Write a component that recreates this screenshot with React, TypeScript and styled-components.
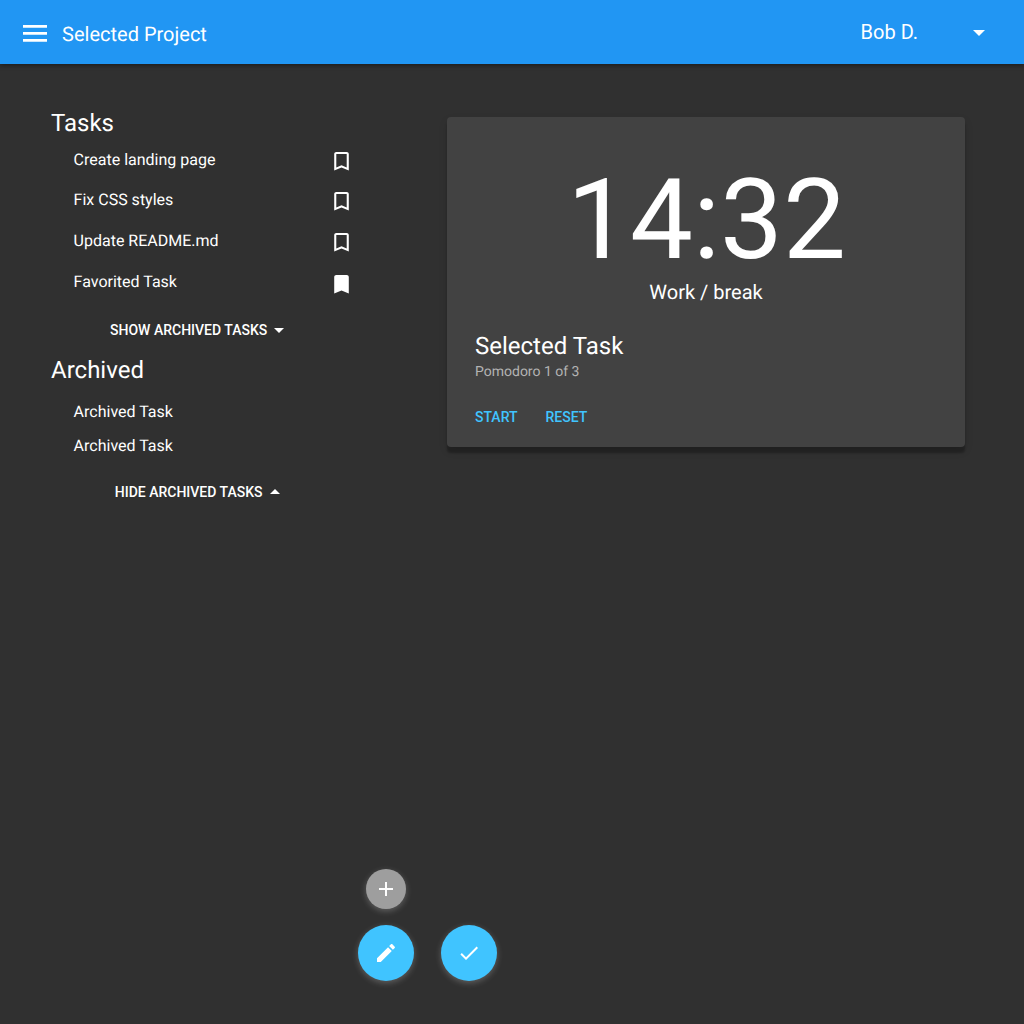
import React from "react";
import styled, { createGlobalStyle } from "styled-components";

const GlobalStyle = createGlobalStyle`
  *, *::before, *::after { box-sizing: border-box; }
  body { margin: 0; background: #303030; }
  button { font: inherit; color: inherit; background: none; border: 0; padding: 0; margin: 0; cursor: pointer; }
  h1, h2, p, ul { margin: 0; padding: 0; font-weight: 400; }
  svg { display: block; flex: none; }
`;

const Page = styled.div`
  display: flex;
  flex-direction: column;
  width: 1024px;
  height: 1024px;
  overflow: hidden;
  background: #303030;
  color: #fff;
  font-family: Roboto, "Liberation Sans", sans-serif;
  font-size: 16px;
  text-rendering: geometricPrecision;
`;

const AppBar = styled.header`
  display: flex;
  align-items: flex-start;
  flex: none;
  height: 64px;
  padding: 20px 39px 0 23px;
  background: #2196f3;
  box-shadow: 0 2px 4px rgba(0, 0, 0, 0.36);
  font-size: 20px;
  line-height: 24px;
`;

const MenuButton = styled.button`
  margin-top: 5px;
`;

const ProjectTitle = styled.h1`
  margin: 2px auto 0 15.1px;
  font-size: 20px;
`;

const UserMenu = styled.button`
  display: flex;
  align-items: flex-start;
  justify-content: space-between;
  width: 124.4px;

  svg { margin-top: 9.5px; }
`;

const Content = styled.main`
  display: flex;
  align-items: flex-start;
  flex: 1;
`;

const Sidebar = styled.section`
  display: flex;
  flex-direction: column;
  width: 447px;
  padding: 45px 93px 0 51px;
`;

const Heading = styled.h2`
  font-size: 24px;
  line-height: 28px;
`;

const List = styled.ul<{ $top: number }>`
  display: flex;
  flex-direction: column;
  list-style: none;
  padding: ${(p) => p.$top}px 0 0 22.6px;
`;

const Item = styled.li<{ $height: number }>`
  display: flex;
  justify-content: space-between;
  height: ${(p) => p.$height}px;
  line-height: 24px;
`;

const Toggle = styled.button<{ $top: number; $bottom: number; $lift?: number }>`
  display: flex;
  align-items: center;
  align-self: center;
  gap: 7px;
  margin: ${(p) => p.$top}px 10.7px ${(p) => p.$bottom}px 0;
  font-size: 14px;
  font-weight: 500;
  line-height: 20px;

  svg { margin-bottom: ${(p) => p.$lift ?? 0}px; }
`;

const TimerCard = styled.section`
  display: flex;
  flex-direction: column;
  width: 518px;
  height: 330px;
  margin-top: 53px;
  padding: 44px 28px 0;
  border-radius: 4px;
  background: #424242;
  box-shadow: 0 6px 2px rgba(0, 0, 0, 0.25), 0 4px 8px rgba(0, 0, 0, 0.12);
`;

const Clock = styled.div`
  padding-left: 1px;
  font-size: 112px;
  line-height: 120px;
  text-align: center;
`;

const Phase = styled.p`
  margin-top: -1px;
  font-size: 20px;
  line-height: 24px;
  text-align: center;
`;

const TaskName = styled.h2`
  margin-top: 28px;
  font-size: 24px;
  line-height: 28px;
`;

const Progress = styled.p`
  margin-top: 2px;
  color: #b3b3b3;
  font-size: 14px;
  line-height: 20px;
`;

const Actions = styled.div`
  display: flex;
  gap: 28px;
  margin-top: 24.5px;
`;

const TextButton = styled.button`
  color: #40c4ff;
  font-size: 14px;
  font-weight: 500;
  line-height: 20px;
`;

const FabBar = styled.footer`
  display: flex;
  align-items: flex-end;
  gap: 26.5px;
  padding: 0 0 43px 358.2px;
`;

const FabStack = styled.div`
  display: flex;
  flex-direction: column;
  align-items: center;
  gap: 16px;
`;

const Fab = styled.button<{ $mini?: boolean }>`
  display: flex;
  align-items: center;
  justify-content: center;
  width: ${(p) => (p.$mini ? 40 : 56)}px;
  height: ${(p) => (p.$mini ? 40 : 56)}px;
  border-radius: 50%;
  background: ${(p) => (p.$mini ? "#9e9e9e" : "#40c4ff")};
  box-shadow: 0 2px 6px rgba(255, 255, 255, 0.24);
`;

const MenuIcon = () => (
  <svg width="24" height="17" viewBox="0 0 24 17" fill="#fff">
    <path d="M0 0h24v2.8H0zM0 7h24v2.8H0zM0 14h24v2.8H0z" />
  </svg>
);

const Caret = ({ width = 10, height = 5, up = false }: { width?: number; height?: number; up?: boolean }) => (
  <svg width={width} height={height} viewBox="0 0 10 5" preserveAspectRatio="none" fill="#fff">
    <path d={up ? "M0 5l5-5 5 5z" : "M0 0l5 5 5-5z"} />
  </svg>
);

const Bookmark = styled.svg<{ $top: number }>`
  margin-top: ${(p) => p.$top}px;
  fill: #fff;
`;

const BookmarkIcon = ({ filled }: { filled: boolean }) => (
  <Bookmark $top={filled ? 2 : 1} width="25" height="24.5" viewBox="0 0 24 24" preserveAspectRatio="none">
    <path
      d={
        filled
          ? "M17 3H7c-1.1 0-2 .9-2 2v16l7-3 7 3V5c0-1.1-.9-2-2-2z"
          : "M17 3H7c-1.1 0-2 .9-2 2v16l7-3 7 3V5c0-1.1-.9-2-2-2zm0 15l-5-2.18L7 18V5h10v13z"
      }
    />
  </Bookmark>
);

const FabIcon = ({ d }: { d: string }) => (
  <svg width="24" height="24" viewBox="0 0 24 24" fill="#fff">
    <path d={d} />
  </svg>
);

const ADD = "M19 13h-6v6h-2v-6H5v-2h6V5h2v6h6v2z";
const EDIT =
  "M3 17.25V21h3.75L17.81 9.94l-3.75-3.75L3 17.25zM20.71 7.04c.39-.39.39-1.02 0-1.41l-2.34-2.34c-.39-.39-1.02-.39-1.41 0l-1.83 1.83 3.75 3.75 1.83-1.83z";
const CHECK = "M9 16.17L4.83 12l-1.42 1.41L9 19 21 7l-1.41-1.41z";

const tasks = [
  { name: "Create landing page", favorite: false, height: 40 },
  { name: "Fix CSS styles", favorite: false, height: 41 },
  { name: "Update README.md", favorite: false, height: 41 },
  { name: "Favorited Task", favorite: true, height: 24 },
];

const archived = ["Archived Task", "Archived Task"];

export default function App() {
  return (
    <Page>
      <GlobalStyle />
      <AppBar>
        <MenuButton aria-label="Menu">
          <MenuIcon />
        </MenuButton>
        <ProjectTitle>Selected Project</ProjectTitle>
        <UserMenu>
          Bob D.
          <Caret width={12} height={6} />
        </UserMenu>
      </AppBar>
      <Content>
        <Sidebar>
          <Heading>Tasks</Heading>
          <List $top={11}>
            {tasks.map((task) => (
              <Item key={task.name} $height={task.height}>
                {task.name}
                <BookmarkIcon filled={task.favorite} />
              </Item>
            ))}
          </List>
          <Toggle $top={26} $bottom={16}>
            SHOW ARCHIVED TASKS
            <Caret />
          </Toggle>
          <Heading>Archived</Heading>
          <List $top={16}>
            {archived.map((name, i) => (
              <Item key={i} $height={34}>
                {name}
              </Item>
            ))}
          </List>
          <Toggle $top={14} $bottom={0} $lift={2}>
            HIDE ARCHIVED TASKS
            <Caret up />
          </Toggle>
        </Sidebar>
        <TimerCard>
          <Clock>14:32</Clock>
          <Phase>Work / break</Phase>
          <TaskName>Selected Task</TaskName>
          <Progress>Pomodoro 1 of 3</Progress>
          <Actions>
            <TextButton>START</TextButton>
            <TextButton>RESET</TextButton>
          </Actions>
        </TimerCard>
      </Content>
      <FabBar>
        <FabStack>
          <Fab $mini aria-label="Add">
            <FabIcon d={ADD} />
          </Fab>
          <Fab aria-label="Edit">
            <FabIcon d={EDIT} />
          </Fab>
        </FabStack>
        <Fab aria-label="Done">
          <FabIcon d={CHECK} />
        </Fab>
      </FabBar>
    </Page>
  );
}
